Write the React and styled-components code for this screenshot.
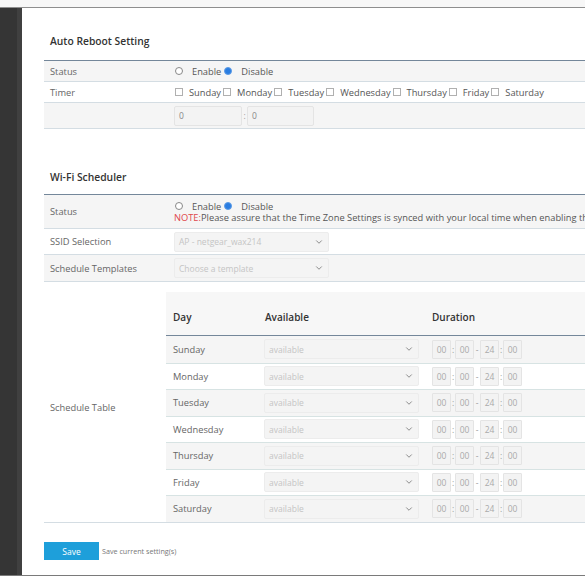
import React from "react";
import styled, { createGlobalStyle } from "styled-components";
import { ChevronDown } from "lucide-react";

const GlobalStyle = createGlobalStyle`
  html, body {
    margin: 0;
    padding: 0;
    background: #fff;
    overflow: hidden;
  }
  body {
    font-family: "Open Sans", Lato, "Liberation Sans", sans-serif;
    color: #555;
  }
`;

const Page = styled.div`
  width: 585px;
  height: 585px;
  display: flex;
  flex-direction: column;
  overflow: hidden;
`;

const TopStrip = styled.div`
  height: 7px;
  background: #f7f7f7;
  border-bottom: 1px solid #8e8e8e;
  flex-shrink: 0;
`;

const Main = styled.div`
  display: flex;
  height: 567px;
  border-bottom: 1px solid #7a7a7a;
  flex-shrink: 0;
`;

const SideBar = styled.div`
  width: 17px;
  background: #353535;
  border-right: 5px solid #404040;
  box-shadow: 1px 0 0 #6a6a6a;
  flex-shrink: 0;
`;

const Content = styled.div`
  flex: 1;
  min-width: 0;
  background: #fff;
  padding: 0 0 0 22px;
  overflow: hidden;
`;

const Title = styled.h2`
  margin: ${(p) => p.$top}px 0 0 6px;
  height: 16px;
  line-height: 16px;
  font-size: 10.3px;
  font-weight: 600;
  color: #333;
  white-space: nowrap;
`;

const Table = styled.div`
  margin-top: ${(p) => p.$gap}px;
  width: 620px;
  border-top: 1.5px solid #74879a;
  border-bottom: 1px solid #d4dde3;
`;

const Row = styled.div`
  display: grid;
  grid-template-columns: 122px 1fr;
  align-items: center;
  height: ${(p) => p.$h}px;
  box-sizing: border-box;
  background: ${(p) => (p.$alt ? "#f5f5f5" : "#fff")};
  border-top: ${(p) => (p.$first ? "none" : "1px solid #d4dde3")};
  padding-top: ${(p) => p.$padTop || 0}px;
`;

const Label = styled.div`
  padding-left: 6px;
  font-size: 9.3px;
  color: #666;
  white-space: nowrap;
`;

const Value = styled.div`
  padding-left: 8px;
  display: flex;
  flex-direction: column;
  font-size: 9.3px;
  color: #555;
  white-space: nowrap;
  min-width: 0;
`;

const Line = styled.div`
  display: flex;
  align-items: center;
  height: 11px;
  line-height: 11px;
  white-space: nowrap;
`;

const Radio = styled.span`
  width: 8px;
  height: 8px;
  border-radius: 50%;
  box-sizing: border-box;
  border: 1px solid ${(p) => (p.$on ? "#5d9ce6" : "#888")};
  background: ${(p) => (p.$on ? "#2a7de1" : "#fff")};
  margin: 0 9px 0 ${(p) => p.$ml}px;
  flex-shrink: 0;
`;

const Check = styled.span`
  width: 8px;
  height: 8px;
  box-sizing: border-box;
  border: 1px solid #b0b0b0;
  background: #fff;
  margin: 0 6px 0 ${(p) => p.$ml}px;
  flex-shrink: 0;
`;

const Note = styled.span`
  color: #e0474c;
`;

const InputBox = styled.div`
  width: ${(p) => p.$w}px;
  height: 20px;
  box-sizing: border-box;
  background: #f3f3f3;
  border: 1px solid #e4e4e4;
  border-radius: 2px;
  display: flex;
  align-items: center;
  padding-left: 4px;
  font-size: 8.5px;
  color: #888;
  flex-shrink: 0;
`;

const Sep = styled.span`
  width: ${(p) => p.$w || 5}px;
  text-align: center;
  color: #999;
  font-size: 8.5px;
  flex-shrink: 0;
`;

const Select = styled.div`
  width: ${(p) => p.$w}px;
  height: 20px;
  box-sizing: border-box;
  background: #f4f4f4;
  border: 1px solid #ececec;
  border-radius: 2px;
  display: flex;
  align-items: center;
  justify-content: space-between;
  padding: 0 4px 0 4px;
  font-size: 8.5px;
  color: #c4c4c4;
  flex-shrink: 0;
  svg {
    color: #777;
  }
`;

const InnerTable = styled.div`
  align-self: start;
  width: 460px;
`;

const InnerHead = styled.div`
  display: grid;
  grid-template-columns: 92px 167px 1fr;
  height: 44px;
  box-sizing: border-box;
  background: #f7f7f7;
  border-bottom: 1.5px solid #74879a;
  align-items: end;
  padding-bottom: 11px;
`;

const HeadCell = styled.div`
  padding-left: 7px;
  font-size: 10px;
  font-weight: 600;
  color: #333;
`;

const InnerRow = styled.div`
  display: grid;
  grid-template-columns: 92px 167px 1fr;
  align-items: center;
  height: 26.5px;
  box-sizing: border-box;
  background: ${(p) => (p.$alt ? "#f5f5f5" : "#fff")};
  border-top: ${(p) => (p.$first ? "none" : "1px solid #d7e3e3")};
`;

const DayCell = styled.div`
  padding-left: 7px;
  font-size: 9.3px;
  color: #666;
`;

const Cell = styled.div`
  padding-left: ${(p) => p.$pl || 0}px;
  display: flex;
  align-items: center;
`;

const TimeBox = styled.div`
  width: 19px;
  height: 19px;
  box-sizing: border-box;
  background: #f3f3f3;
  border: 1px solid #e4e4e4;
  border-radius: 1px;
  display: flex;
  align-items: center;
  justify-content: center;
  font-size: 8.5px;
  color: #aaa;
  flex-shrink: 0;
`;

const Footer = styled.div`
  display: flex;
  align-items: center;
  margin-top: 19px;
  gap: 3px;
`;

const SaveButton = styled.button`
  width: 55px;
  height: 18px;
  border: none;
  border-radius: 0;
  background: #1e9fda;
  color: #fff;
  font-family: inherit;
  font-size: 8.5px;
  padding: 0;
`;

const Hint = styled.span`
  font-size: 7.2px;
  color: #777;
`;

const days = [
  "Sunday",
  "Monday",
  "Tuesday",
  "Wednesday",
  "Thursday",
  "Friday",
  "Saturday",
];

const Arrow = () => <ChevronDown size={10} strokeWidth={2} />;

export default function App() {
  return (
    <Page>
      <GlobalStyle />
      <TopStrip />
      <Main>
        <SideBar />
        <Content>
          <Title $top={25}>Auto Reboot Setting</Title>
          <Table $gap={11}>
            <Row $h={20} $alt $first>
              <Label>Status</Label>
              <Value>
                <Line>
                  <Radio $ml={1} />
                  Enable
                  <Radio $on $ml={3} />
                  Disable
                </Line>
              </Value>
            </Row>
            <Row $h={21}>
              <Label>Timer</Label>
              <Value>
                <Line>
                  {days.map((d, i) => (
                    <React.Fragment key={d}>
                      <Check $ml={i === 0 ? 1 : 2} />
                      {d}
                    </React.Fragment>
                  ))}
                </Line>
              </Value>
            </Row>
            <Row $h={26} $alt>
              <Label />
              <Value>
                <Line>
                  <InputBox $w={68}>0</InputBox>
                  <Sep>:</Sep>
                  <InputBox $w={67}>0</InputBox>
                </Line>
              </Value>
            </Row>
          </Table>

          <Title $top={40}>Wi-Fi Scheduler</Title>
          <Table $gap={9}>
            <Row $h={33} $alt $first>
              <Label>Status</Label>
              <Value>
                <Line>
                  <Radio $ml={1} />
                  Enable
                  <Radio $on $ml={3} />
                  Disable
                </Line>
                <Line>
                  <Note>NOTE:</Note>
                  Please assure that the Time Zone Settings is synced with your
                  local time when enabling the Wi-Fi Scheduler.
                </Line>
              </Value>
            </Row>
            <Row $h={26}>
              <Label>SSID Selection</Label>
              <Value>
                <Select $w={155}>
                  AP - netgear_wax214
                  <Arrow />
                </Select>
              </Value>
            </Row>
            <Row $h={27} $alt>
              <Label>Schedule Templates</Label>
              <Value>
                <Select $w={155}>
                  Choose a template
                  <Arrow />
                </Select>
              </Value>
            </Row>
            <Row $h={241} $padTop={10}>
              <Label>Schedule Table</Label>
              <InnerTable>
                <InnerHead>
                  <HeadCell>Day</HeadCell>
                  <HeadCell>Available</HeadCell>
                  <HeadCell>Duration</HeadCell>
                </InnerHead>
                {days.map((d, i) => (
                  <InnerRow key={d} $alt={i % 2 === 0} $first={i === 0}>
                    <DayCell>{d}</DayCell>
                    <Cell $pl={6}>
                      <Select $w={155}>
                        available
                        <Arrow />
                      </Select>
                    </Cell>
                    <Cell $pl={7}>
                      <TimeBox>00</TimeBox>
                      <Sep $w={4}>:</Sep>
                      <TimeBox>00</TimeBox>
                      <Sep $w={6}>-</Sep>
                      <TimeBox>24</TimeBox>
                      <Sep $w={4}>:</Sep>
                      <TimeBox>00</TimeBox>
                    </Cell>
                  </InnerRow>
                ))}
              </InnerTable>
            </Row>
          </Table>

          <Footer>
            <SaveButton>Save</SaveButton>
            <Hint>Save current setting(s)</Hint>
          </Footer>
        </Content>
      </Main>
    </Page>
  );
}
